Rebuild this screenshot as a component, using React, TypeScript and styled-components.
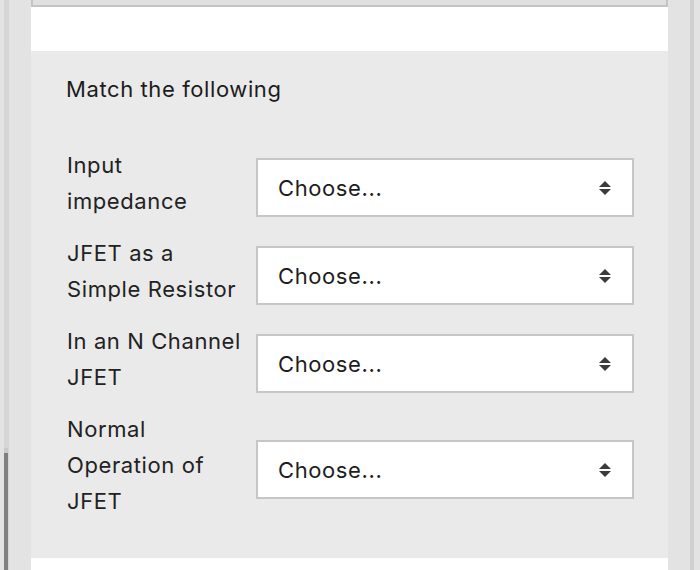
import React from 'react'
import styled, { createGlobalStyle } from 'styled-components'

const GlobalStyle = createGlobalStyle`
  html, body {
    margin: 0;
    padding: 0;
    background: #e4e4e4;
  }
  body {
    font-family: Inter, "Liberation Sans", Arial, sans-serif;
    color: #1f1f1f;
  }
`

interface MatchRow {
  label: string[];
}

const rows: MatchRow[] = [
  { label: ['Input', 'impedance'] },
  { label: ['JFET as a', 'Simple Resistor'] },
  { label: ['In an N Channel', 'JFET'] },
  { label: ['Normal', 'Operation of', 'JFET'] },
]

const Frame = styled.div`
  display: flex;
  width: 700px;
  height: 570px;
  overflow: hidden;
`

const LeftRail = styled.div`
  display: flex;
  width: 31px;
  flex-shrink: 0;
  background: #e3e3e3;
  padding-left: 4px;
  box-sizing: border-box;
`

const Track = styled.div`
  display: flex;
  flex-direction: column;
  justify-content: flex-end;
  width: 5px;
  background: #d6d6d6;
`

const Thumb = styled.div`
  width: 4px;
  height: 117px;
  background: #808080;
  border-top: 5px solid #c9c9c9;
`

const RightRail = styled.div`
  display: flex;
  justify-content: flex-end;
  width: 32px;
  flex-shrink: 0;
  background: #e3e3e3;
  padding-right: 6px;
  box-sizing: border-box;
`

const RailLine = styled.div`
  width: 4px;
  background: #d0d0d0;
`

const Content = styled.div`
  display: flex;
  flex-direction: column;
  flex: 1;
  background: #fff;
`

const TopCard = styled.div`
  height: 7px;
  flex-shrink: 0;
  background: #e0e0e0;
  border: 2px solid #c4c4c4;
  border-top: none;
  box-sizing: border-box;
`

const Spacer = styled.div`
  height: 44px;
  flex-shrink: 0;
`

const Panel = styled.section`
  background: #eaeaea;
  padding: 20px 34px 38px 35px;
  height: 507px;
  box-sizing: border-box;
  flex-shrink: 0;
`

const Heading = styled.h2`
  margin: 0 0 40px;
  font-size: 22px;
  font-weight: 400;
  line-height: 36px;
  letter-spacing: 0.6px;
  color: #1c1c1c;
`

const Rows = styled.div`
  display: flex;
  flex-direction: column;
  gap: 16px;
  padding-left: 1px;
`

const Row = styled.div`
  display: grid;
  grid-template-columns: 189px 378px;
  align-items: center;
`

const Label = styled.label`
  font-size: 22px;
  line-height: 36px;
  letter-spacing: 0.6px;
  color: #222;
`

const SelectWrap = styled.div`
  position: relative;
  margin-top: 9px;
`

const Select = styled.select`
  appearance: none;
  -webkit-appearance: none;
  width: 100%;
  height: 59px;
  margin: 0;
  padding: 0 50px 0 20px;
  border: 2px solid #c6c6c6;
  border-radius: 0;
  background: #fff;
  font-family: Inter, "Liberation Sans", Arial, sans-serif;
  font-size: 22px;
  letter-spacing: 0.6px;
  color: #1d1d1d;
  box-sizing: border-box;
  outline: none;
`

const Arrows = styled.svg`
  position: absolute;
  right: 23px;
  top: 50%;
  transform: translateY(-50%);
  pointer-events: none;
`

const SortIcon = () => (
  <Arrows width="12" height="14" viewBox="0 0 12 14">
    <path d="M6 0 L12 6 H0 Z" fill="#3b3b3b" />
    <path d="M0 8 H12 L6 14 Z" fill="#3b3b3b" />
  </Arrows>
)

const App: React.FC = () => {
  return (
    <>
      <GlobalStyle />
      <Frame>
        <LeftRail>
          <Track>
            <Thumb />
          </Track>
        </LeftRail>
        <Content>
          <TopCard />
          <Spacer />
          <Panel>
            <Heading>Match the following</Heading>
            <Rows>
              {rows.map((row, i) => (
                <Row key={i}>
                  <Label htmlFor={`match-${i}`}>
                    {row.label.map((line, j) => (
                      <React.Fragment key={j}>
                        {line}
                        {j < row.label.length - 1 && <br />}
                      </React.Fragment>
                    ))}
                  </Label>
                  <SelectWrap>
                    <Select id={`match-${i}`} defaultValue="">
                      <option value="">Choose...</option>
                    </Select>
                    <SortIcon />
                  </SelectWrap>
                </Row>
              ))}
            </Rows>
          </Panel>
        </Content>
        <RightRail>
          <RailLine />
        </RightRail>
      </Frame>
    </>
  )
}

export default App
